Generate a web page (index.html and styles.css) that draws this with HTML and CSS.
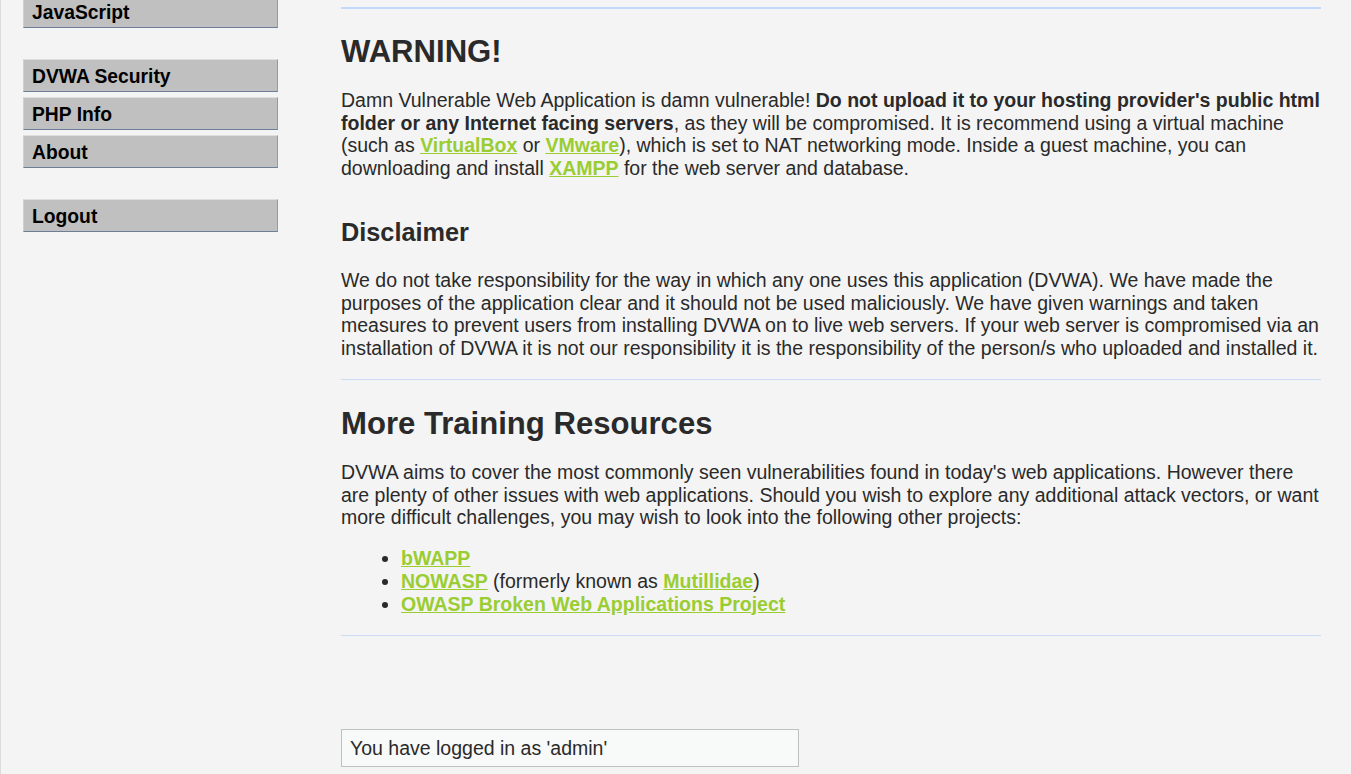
FILE: index.html
```html
<!DOCTYPE html>
<html>
<head>
<meta charset="utf-8">
<title>DVWA</title>
<link rel="stylesheet" href="styles.css">
</head>
<body>
<div class="page">
  <nav class="menu">
    <ul class="menu-group first">
      <li><a class="menu-btn" href="#">JavaScript</a></li>
    </ul>
    <ul class="menu-group">
      <li><a class="menu-btn" href="#">DVWA Security</a></li>
      <li><a class="menu-btn" href="#">PHP Info</a></li>
      <li><a class="menu-btn" href="#">About</a></li>
    </ul>
    <ul class="menu-group">
      <li><a class="menu-btn" href="#">Logout</a></li>
    </ul>
  </nav>
  <main class="content">
    <div class="topline"></div>
    <h1 class="h-warning">WARNING!</h1>
    <p class="p-first">Damn Vulnerable Web Application is damn vulnerable! <strong>Do not upload it to your hosting provider's public html folder or any Internet facing servers</strong>, as they will be compromised. It is recommend using a virtual machine (such as <a href="#">VirtualBox</a> or <a href="#">VMware</a>), which is set to NAT networking mode. Inside a guest machine, you can downloading and install <a href="#">XAMPP</a> for the web server and database.</p>
    <h2 class="h-disclaimer">Disclaimer</h2>
    <p class="p-disclaimer">We do not take responsibility for the way in which any one uses this application (DVWA). We have made the purposes of the application clear and it should not be used maliciously. We have given warnings and taken measures to prevent users from installing DVWA on to live web servers. If your web server is compromised via an installation of DVWA it is not our responsibility it is the responsibility of the person/s who uploaded and installed it.</p>
    <div class="rule rule-one"></div>
    <h1 class="h-resources">More Training Resources</h1>
    <p class="p-resources">DVWA aims to cover the most commonly seen vulnerabilities found in today's web applications. However there are plenty of other issues with web applications. Should you wish to explore any additional attack vectors, or want more difficult challenges, you may wish to look into the following other projects:</p>
    <ul class="projects">
      <li><a href="#">bWAPP</a></li>
      <li><a href="#">NOWASP</a> (formerly known as <a href="#">Mutillidae</a>)</li>
      <li><a href="#">OWASP Broken Web Applications Project</a></li>
    </ul>
    <div class="rule rule-two"></div>
    <div class="system-info">You have logged in as 'admin'</div>
  </main>
</div>
</body>
</html>
```
FILE: styles.css
```css
html, body {
  margin: 0;
  padding: 0;
  overflow: hidden;
  background: #f4f4f4;
}
body {
  font-family: "Liberation Sans", Arial, sans-serif;
  font-size: 19.5px;
  line-height: 22.7px;
  color: #2a2a2a;
}
.page {
  display: flex;
  align-items: flex-start;
  min-height: 774px;
  border-left: 1px solid #dcdcdc;
  box-sizing: border-box;
}
.menu {
  width: 255px;
  margin-left: 22px;
  margin-top: -5px;
  flex: none;
}
.menu-group {
  list-style: none;
  margin: 0 0 31px 0;
  padding: 0;
}
.menu-group li + li {
  margin-top: 5px;
}
.menu-btn {
  display: block;
  background: #c0c0c0;
  color: #000;
  font-size: 19.3px;
  font-weight: bold;
  text-decoration: none;
  line-height: 22px;
  padding: 6px 8px 3px 8px;
  border-top: 1px solid #dedede;
  border-left: 1px solid #d0d0d0;
  border-right: 1px solid #9a9a9a;
  border-bottom: 1px solid #6f7d96;
}
.content {
  flex: 1;
  margin-left: 63px;
  margin-right: 30px;
  padding-top: 7px;
}
.topline {
  height: 2px;
  background: #c3d9fb;
}
h1, h2, p, ul {
  margin: 0;
}
h1 {
  font-size: 31.1px;
  line-height: 36px;
  font-weight: bold;
}
h2 {
  font-size: 25.3px;
  line-height: 30px;
  font-weight: bold;
}
.h-warning { margin-top: 25px; }
.p-first { margin-top: 19px; }
.h-disclaimer { margin-top: 37px; }
.p-disclaimer { margin-top: 22px; }
.rule {
  border-top: 1px solid #cddcf5;
}
.rule-one { margin-top: 19.4px; }
.h-resources { margin-top: 26.3px; }
.p-resources { margin-top: 18.5px; }
.projects {
  margin-top: 18.2px;
  padding-left: 60px;
}
.rule-two { margin-top: 19.8px; }
a {
  color: #9acd32;
  font-weight: bold;
  text-decoration: underline;
}
.system-info {
  margin-top: 93px;
  width: 440px;
  background: #f8f9f9;
  border: 1px solid #c0c0c0;
  padding: 6.8px 8px 6.5px 8px;
}
```
